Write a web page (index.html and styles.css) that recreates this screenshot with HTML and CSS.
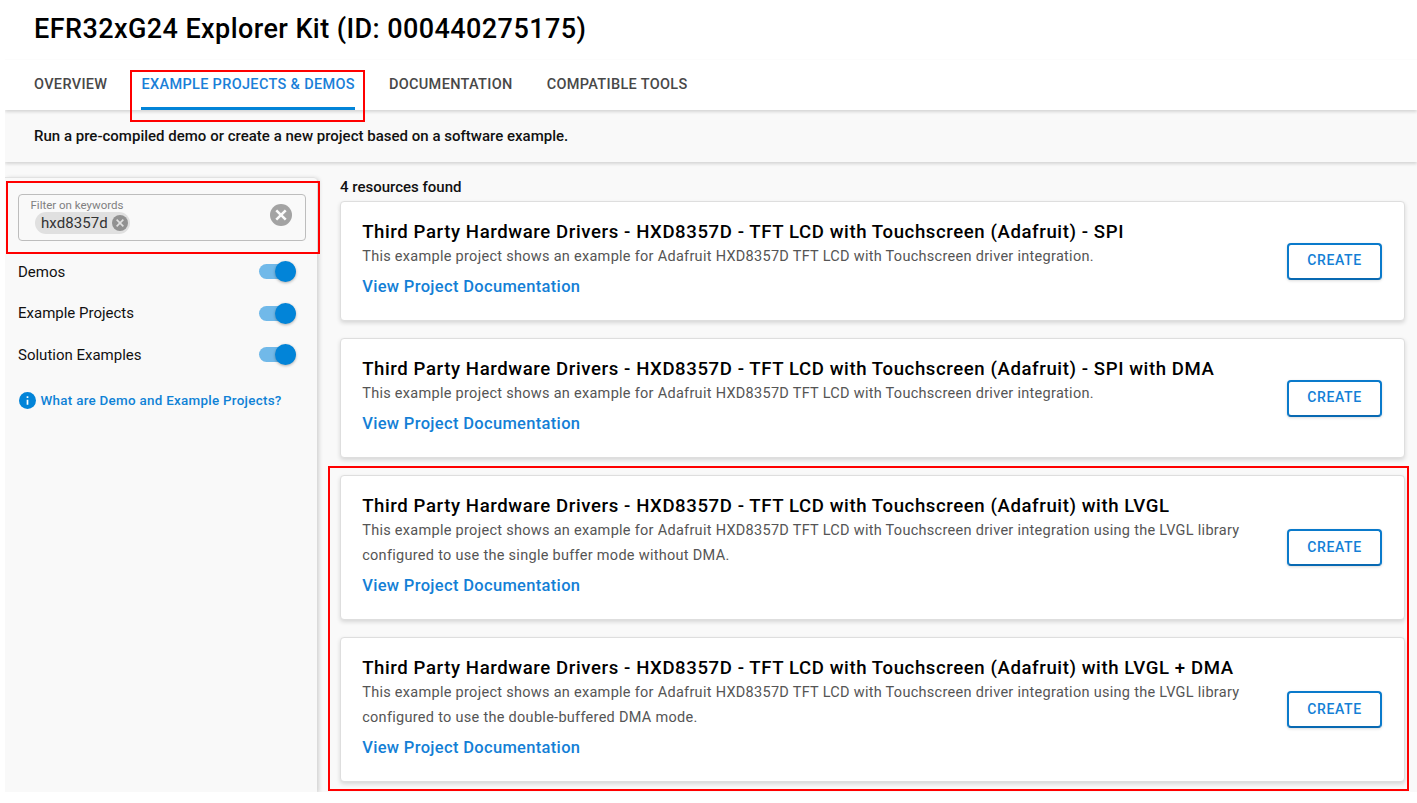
FILE: index.html
```html
<!DOCTYPE html>
<html lang="en">
<head>
<meta charset="utf-8">
<title>EFR32xG24 Explorer Kit</title>
<link rel="stylesheet" href="styles.css">
</head>
<body>
<div class="app">
  <header class="header"><h1 class="title">EFR32xG24 Explorer Kit (ID: 000440275175)</h1></header>
  <nav class="tabs">
    <a class="tab">OVERVIEW</a>
    <a class="tab tab-active">EXAMPLE PROJECTS &amp; DEMOS</a>
    <a class="tab">DOCUMENTATION</a>
    <a class="tab">COMPATIBLE TOOLS</a>
  </nav>
  <div class="intro">Run a pre-compiled demo or create a new project based on a software example.</div>
  <div class="body">
    <aside class="sidebar">
      <div class="field">
        <div class="field-main">
          <span class="field-label">Filter on keywords</span>
          <span class="chip">hxd8357d
            <svg class="chip-x" viewBox="0 0 20 20"><circle cx="10" cy="10" r="10" fill="#919191"/><path d="M5.8 5.8l8.4 8.4M14.2 5.8l-8.4 8.4" stroke="#e0e0e0" stroke-width="2"/></svg>
          </span>
        </div>
        <svg class="clear" viewBox="0 0 20 20"><circle cx="10" cy="10" r="10" fill="#a3a3a3"/><path d="M5.7 5.7l8.6 8.6M14.3 5.7l-8.6 8.6" stroke="#fafafa" stroke-width="2.3"/></svg>
      </div>
      <div class="row"><span>Demos</span><span class="toggle"><span class="knob"></span></span></div>
      <div class="row"><span>Example Projects</span><span class="toggle"><span class="knob"></span></span></div>
      <div class="row"><span>Solution Examples</span><span class="toggle"><span class="knob"></span></span></div>
      <a class="help">
        <svg class="info" viewBox="0 0 20 20"><circle cx="10" cy="10" r="10" fill="#0284d8"/><path d="M9 5h2v2H9zM9 9h2v6H9z" fill="#fff"/></svg>
        What are Demo and Example Projects?
      </a>
    </aside>
    <main class="results">
      <div class="count">4 resources found</div>
      <article class="card">
        <div class="card-text">
          <h2 class="card-title">Third Party Hardware Drivers - HXD8357D - TFT LCD with Touchscreen (Adafruit) - SPI</h2>
          <p class="desc">This example project shows an example for Adafruit HXD8357D TFT LCD with Touchscreen driver integration.</p>
          <a class="doc">View Project Documentation</a>
        </div>
        <button class="create">CREATE</button>
      </article>
      <article class="card">
        <div class="card-text">
          <h2 class="card-title">Third Party Hardware Drivers - HXD8357D - TFT LCD with Touchscreen (Adafruit) - SPI with DMA</h2>
          <p class="desc">This example project shows an example for Adafruit HXD8357D TFT LCD with Touchscreen driver integration.</p>
          <a class="doc">View Project Documentation</a>
        </div>
        <button class="create">CREATE</button>
      </article>
      <article class="card">
        <div class="card-text">
          <h2 class="card-title">Third Party Hardware Drivers - HXD8357D - TFT LCD with Touchscreen (Adafruit) with LVGL</h2>
          <p class="desc">This example project shows an example for Adafruit HXD8357D TFT LCD with Touchscreen driver integration using the LVGL library<br>configured to use the single buffer mode without DMA.</p>
          <a class="doc">View Project Documentation</a>
        </div>
        <button class="create">CREATE</button>
      </article>
      <article class="card">
        <div class="card-text">
          <h2 class="card-title">Third Party Hardware Drivers - HXD8357D - TFT LCD with Touchscreen (Adafruit) with LVGL + DMA</h2>
          <p class="desc">This example project shows an example for Adafruit HXD8357D TFT LCD with Touchscreen driver integration using the LVGL library<br>configured to use the double-buffered DMA mode.</p>
          <a class="doc">View Project Documentation</a>
        </div>
        <button class="create">CREATE</button>
      </article>
    </main>
  </div>
</div>
<div class="mark mark-tab"></div>
<div class="mark mark-filter"></div>
<div class="mark mark-cards"></div>
</body>
</html>
```
FILE: styles.css
```css
* { box-sizing: border-box; }
body {
  margin: 0;
  height: 803px;
  overflow: hidden;
  background: #fff;
  color: #111;
  font-family: Roboto, sans-serif;
  font-size: 15px;
}
.app {
  margin-left: 5px;
  height: 792px;
  display: flex;
  flex-direction: column;
  overflow: hidden;
  background: #f9f9f9;
}
.header {
  flex: none;
  height: 60px;
  padding: 11px 29px 0;
  background: #fff;
  border-bottom: 1px solid #fcfcfc;
  z-index: 3;
}
.title {
  margin: 0;
  font-size: 27px;
  font-weight: 500;
  line-height: 36px;
  letter-spacing: 0.42px;
  color: #000;
}
.tabs {
  flex: none;
  height: 50px;
  padding-left: 29px;
  display: flex;
  gap: 34px;
  background: #fff;
  box-shadow: 0 2px 3px rgba(0, 0, 0, 0.14);
  z-index: 2;
}
.tab {
  height: 50px;
  padding-top: 15px;
  line-height: 20px;
  font-size: 14.5px;
  font-weight: 500;
  letter-spacing: 0.33px;
  color: #484848;
}
.tab-active {
  color: #1a80d8;
  border-bottom: 3px solid #0284d8;
}
.intro {
  flex: none;
  height: 52px;
  padding: 16px 29px 0;
  line-height: 20px;
  font-weight: 500;
  letter-spacing: 0.01px;
  background: #f9f9f9;
  box-shadow: 0 2px 3px rgba(0, 0, 0, 0.14);
  z-index: 1;
}
.body {
  flex: 1;
  min-height: 0;
  display: flex;
  gap: 23px;
}
.sidebar {
  flex: none;
  width: 312px;
  margin-top: 15px;
  padding: 16px 11px 0 13px;
  border-top: 1px solid #e2e2e2;
  border-top-right-radius: 4px;
  box-shadow: 2px 1px 4px rgba(0, 0, 0, 0.16);
}
.field {
  height: 47px;
  margin-bottom: 10px;
  padding: 0 13.5px 0 11.5px;
  display: flex;
  justify-content: space-between;
  border: 1px solid #bdbdbd;
  border-radius: 4px;
}
.field-main {
  display: flex;
  flex-direction: column;
  align-items: flex-start;
}
.field-label {
  margin-top: 3px;
  line-height: 14px;
  font-size: 11.5px;
  color: #808080;
}
.chip {
  height: 22px;
  margin: 0 0 0 4.5px;
  padding: 0 2px 0 6px;
  display: flex;
  align-items: center;
  gap: 4.5px;
  border-radius: 11px;
  background: #e0e0e0;
  color: #333;
  letter-spacing: 0.08px;
}
.chip-x { width: 16px; height: 16px; }
.clear { width: 22px; height: 22px; margin-top: 8.5px; }
.row {
  height: 41.5px;
  padding-right: 10px;
  display: flex;
  align-items: center;
  justify-content: space-between;
}
.toggle {
  width: 37px;
  height: 15px;
  display: flex;
  align-items: center;
  justify-content: flex-end;
  border-radius: 8px;
  background: #71b9e9;
}
.knob {
  width: 21px;
  height: 21px;
  border-radius: 50%;
  background: #0284d8;
  box-shadow: 0 1px 3px rgba(0, 0, 0, 0.3);
}
.help {
  margin-top: 15px;
  height: 20px;
  display: flex;
  align-items: center;
  gap: 5px;
  padding-left: 0.5px;
  font-size: 13.4px;
  font-weight: 500;
  letter-spacing: 0.28px;
  white-space: nowrap;
  color: #0f82d6;
}
.info { width: 17px; height: 17px; }
.results {
  flex: 1;
  padding-right: 12px;
  display: flex;
  flex-direction: column;
  gap: 17px;
}
.count {
  height: 22px;
  margin-top: 15px;
  margin-bottom: -15px;
  line-height: 21px;
  font-weight: 500;
}
.card {
  flex: none;
  padding: 18px 22px 21px 21.2px;
  display: flex;
  align-items: center;
  justify-content: space-between;
  background: #fff;
  border: 1px solid #dedede;
  border-radius: 4px;
  box-shadow: 0 2px 4px rgba(0, 0, 0, 0.14);
}
.card-title {
  margin: 0;
  font-size: 18.6px;
  font-weight: 500;
  line-height: 25px;
  letter-spacing: 0.587px;
  color: #000;
}
.desc {
  margin: 0;
  font-size: 14.5px;
  line-height: 24.8px;
  letter-spacing: 0.288px;
  color: #555;
}
.doc {
  display: block;
  margin-top: 4.3px;
  line-height: 25px;
  font-size: 16.5px;
  font-weight: 500;
  letter-spacing: 0.325px;
  color: #147fd6;
}
.create {
  flex: none;
  width: 95px;
  height: 37px;
  margin-top: 3px;
  padding: 0 0 2px;
  border: 2px solid #0a7acb;
  border-bottom-color: #0869b2;
  border-radius: 4px;
  background: #fff;
  font: 500 14px Roboto, sans-serif;
  letter-spacing: 0.6px;
  color: #147fd6;
  box-shadow: 0 1px 3px rgba(0, 0, 0, 0.14);
}
.mark {
  position: absolute;
  z-index: 5;
  border: 2px solid #f00;
}
.mark-tab { left: 130px; top: 70px; width: 235px; height: 52px; }
.mark-filter { left: 6px; top: 181px; width: 314px; height: 73px; }
.mark-cards { left: 328px; top: 466px; width: 1081px; height: 325px; }
```
